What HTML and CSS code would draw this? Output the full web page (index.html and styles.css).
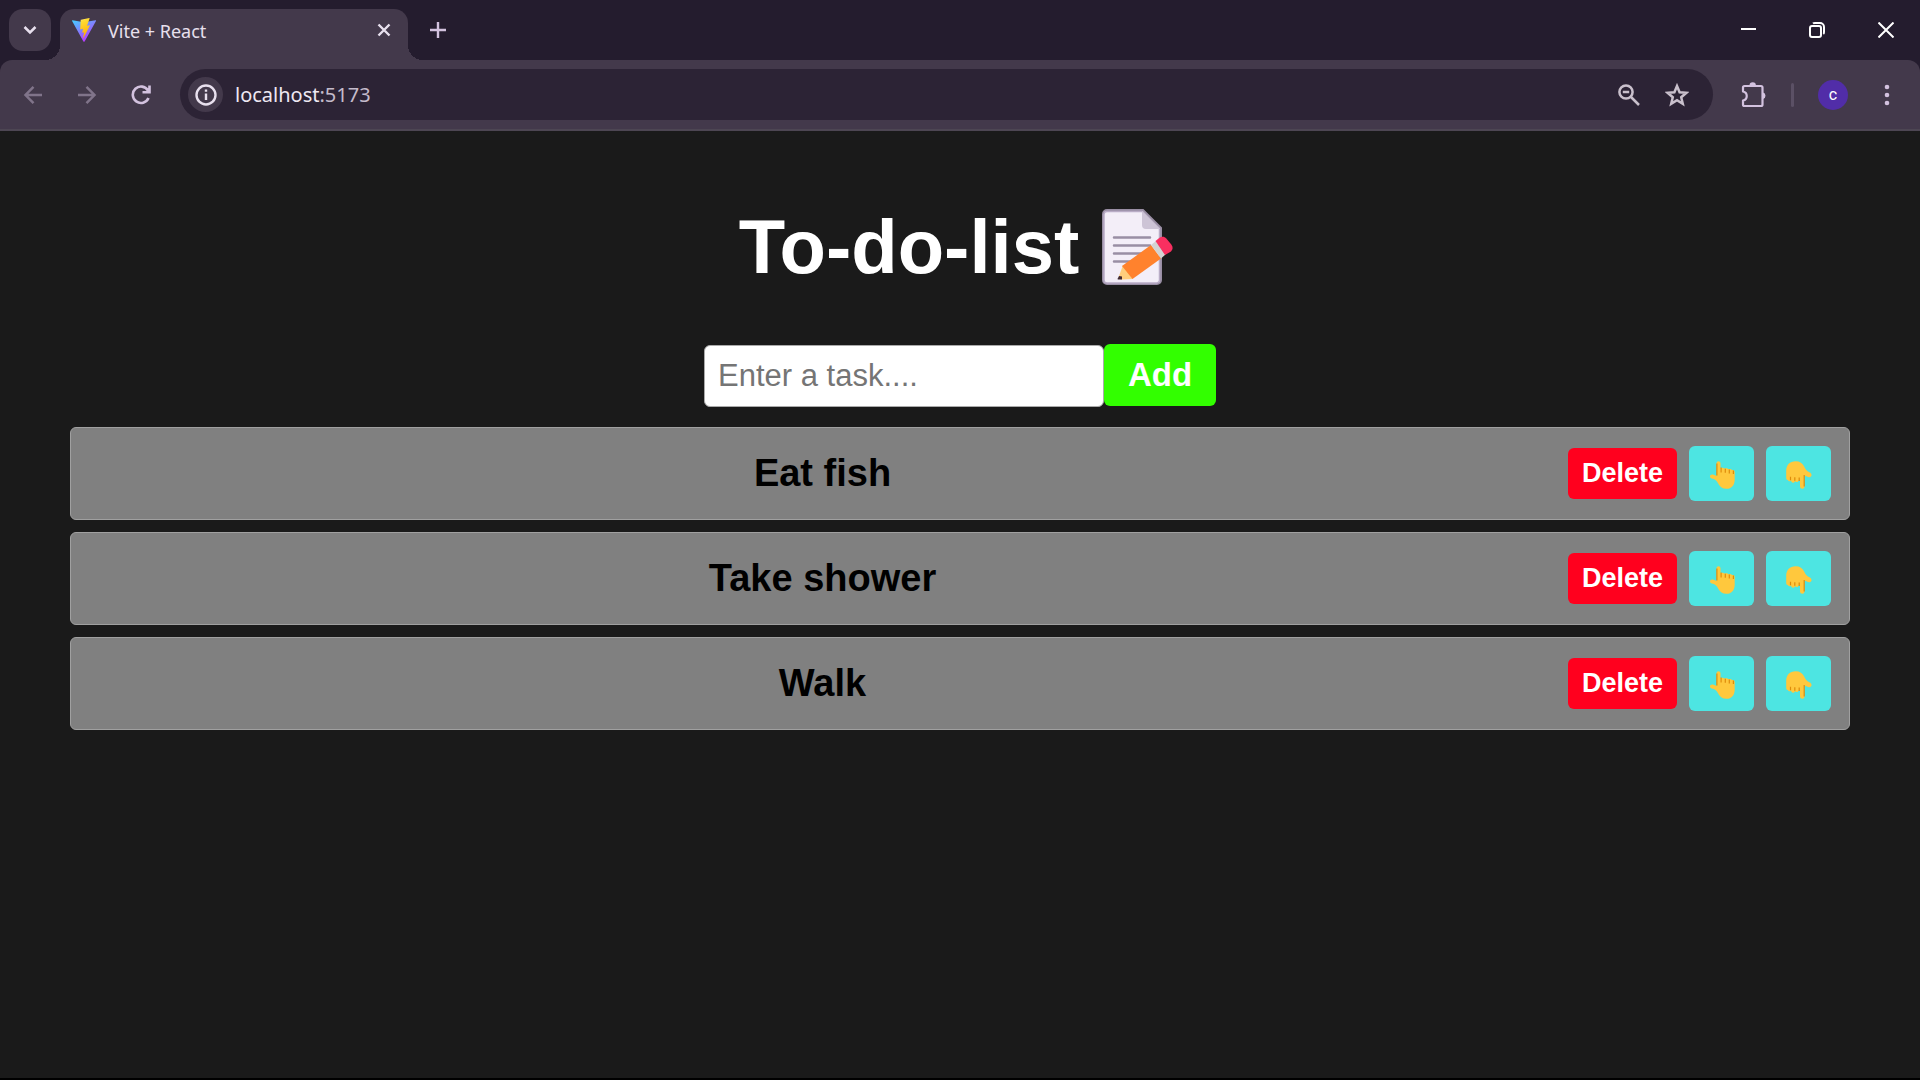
FILE: index.html
```html
<!DOCTYPE html>
<html lang="en">
<head>
<meta charset="utf-8">
<meta name="viewport" content="width=device-width, initial-scale=1">
<title>Vite + React</title>
<link rel="stylesheet" href="styles.css">
</head>
<body>
<svg class="sprite" aria-hidden="true">
  <symbol id="hand-up" viewBox="-2 0 28 28">
    <path fill="#ffc83d" d="M6.500 2.200a2 2 0 0 1 4 0V7.200c.6-.6 3.400-.6 4 .5.800-.6 3.400-.4 3.900.6.900-.5 3 -.2 3.500.8 1-.4 2.800.1 2.800 1.700V18.500c0 5.600-3 9.300-8.300 9.300-4.200 0-6.800-2-8.400-5.500-1-2.200-2.500-3.800-5-4.500C1 17.400 0 16.500 0 15.400c0-1.400 1.400-2.200 3-1.800L6.500 14.900z"/>
    <path fill="none" stroke="#d67d00" stroke-opacity=".8" stroke-width="1.200" d="M6.900 2.500v12M11.100 6.500v5M15.300 7.800v4M19.300 8.500v4M23.400 9.500v3.500"/>
  </symbol>
  <symbol id="hand-down" viewBox="0 0 26 28">
    <path fill="#ffc83d" d="M14 25.500V19.500l-1.500.2a1.800 1.800 0 0 1-3.400.3 1.900 1.900 0 0 1-4-.4 1.900 1.900 0 0 1-3.300-.5C.4 19 .200 18 .200 16.500V10C.200 4 3.800.3 9.600.3c4.300 0 7.100 2 8.700 5.500 1 2.600 2.600 4.400 5 5.500 1.600.7 2.200 1.500 2.200 2.800 0 1.800-1.600 2.500-3.400 1.800L18.500 14.500v11a2.200 2.200 0 0 1-4.500 0z"/>
    <path fill="none" stroke="#d67d00" stroke-opacity=".8" stroke-width="1.200" d="M4.500 15.800v3.400M8.800 16.200v3.600M13.200 16.500v3.600M18.200 14v11.500"/>
  </symbol>
</svg>

<header class="browser">
  <div class="tabstrip">
    <button class="tab-search" aria-label="Search tabs"><svg width="14" height="10" viewBox="0 0 14 10"><path d="M1.500 2L7 7.500 12.500 2" fill="none" stroke="currentColor" stroke-width="2.500"/></svg></button>
    <div class="tab">
      <svg class="favicon" width="24" height="24" viewBox="0 0 24 24">
        <defs>
          <linearGradient id="shield" x1="0" y1="0" x2=".6" y2="1"><stop offset="0" stop-color="#41d1ff"/><stop offset="1" stop-color="#bd34fe"/></linearGradient>
          <linearGradient id="bolt" x1=".4" y1="0" x2=".6" y2="1"><stop offset="0" stop-color="#ffea83"/><stop offset=".1" stop-color="#ffdd35"/><stop offset="1" stop-color="#ffa800"/></linearGradient>
        </defs>
        <path fill="url(#shield)" d="M.5 2.200L12 4.200l11.500-2c.5 0 .7.400.5.800L12.600 23.400c-.3.500-.9.500-1.200 0L.1 3c-.2-.4 0-.8.400-.8z"/>
        <path fill="url(#bolt)" d="M17.300.1L9 1.700c-.2 0-.3.200-.3.300L8.200 11c0 .2.200.4.400.4l2.400-.6-.7 3.500c0 .3.200.5.400.4l1.500-.4-1.100 5.200c-.1.400.4.500.5.200l6.200-12c.1-.2-.1-.5-.3-.4l-2.500.4 2.600-7.200c.1-.2-.1-.4-.3-.4z"/>
      </svg>
      <span class="tab-title">Vite + React</span>
      <button class="tab-close" aria-label="Close tab"><svg width="14" height="14" viewBox="0 0 14 14"><path d="M1.500 1.500l11 11M12.500 1.500l-11 11" stroke="currentColor" stroke-width="2.400"/></svg></button>
    </div>
    <button class="new-tab" aria-label="New tab"><svg width="16" height="16" viewBox="0 0 16 16"><path d="M8 0v16M0 8h16" stroke="currentColor" stroke-width="2.400"/></svg></button>
    <div class="window-controls">
      <button aria-label="Minimize"><svg width="16" height="16" viewBox="0 0 16 16"><path d="M1 7h15" stroke="currentColor" stroke-width="2"/></svg></button>
      <button aria-label="Restore"><svg width="16" height="16" viewBox="0 0 16 16" fill="none" stroke="currentColor" stroke-width="2"><rect x="1" y="4" width="11" height="11" rx="2"/><path d="M4 1.500C4.500 1 5 1 6 1h5a4 4 0 0 1 4 4v5c0 1-.1 1.600-.7 2"/></svg></button>
      <button aria-label="Close window"><svg width="16" height="16" viewBox="0 0 16 16"><path d="M.5 .5l15 15M15.500 .5l-15 15" stroke="currentColor" stroke-width="2"/></svg></button>
    </div>
  </div>

  <div class="toolbar">
    <button class="nav dim" aria-label="Back"><svg width="20" height="20" viewBox="0 0 20 20" fill="none" stroke="currentColor" stroke-width="2.500"><path d="M19 10H3M10.500 1.800L2.500 10l8 8.200"/></svg></button>
    <button class="nav dim" aria-label="Forward"><svg width="20" height="20" viewBox="0 0 20 20" fill="none" stroke="currentColor" stroke-width="2.500"><path d="M1 10h16M9.500 1.800l8 8.200-8 8.200"/></svg></button>
    <button class="nav" aria-label="Reload"><svg width="20" height="20" viewBox="0 0 20 20" fill="none" stroke="currentColor" stroke-width="2.600"><path d="M17.500 13A8.200 8.200 0 1 1 17 5.500L18 7M18.500 .5V7.300H11.500"/></svg></button>
    <div class="omnibox">
      <button class="site-info" aria-label="View site information"><svg width="22" height="22" viewBox="0 0 22 22"><circle cx="11" cy="11" r="9.500" fill="none" stroke="currentColor" stroke-width="2.400"/><path d="M11 9.500v6.500M11 5.500v2.300" stroke="currentColor" stroke-width="2.400"/></svg></button>
      <a class="address" href="#"><span class="host">localhost</span>:5173</a>
      <button class="omni-action" aria-label="Zoom"><svg width="22" height="22" viewBox="0 0 22 22" fill="none" stroke="currentColor" stroke-width="2.500"><circle cx="8" cy="8" r="6.600"/><path d="M13 13l8 8M4.800 8h6.400"/></svg></button>
      <button class="omni-action" aria-label="Bookmark this tab"><svg width="24" height="24" viewBox="0 0 24 24" fill="none" stroke="currentColor" stroke-width="2.500"><path d="M12 3l2.600 6.200 6.800.6-5.200 4.400 1.600 6.600L12 17.300l-5.800 3.500 1.600-6.600-5.200-4.400 6.800-.6z"/></svg></button>
    </div>
    <button class="extensions" aria-label="Extensions"><svg width="26" height="26" viewBox="0 0 26 26"><path d="M3.500 4H20a1.500 1.500 0 0 1 1.500 1.500V22.500A1.500 1.500 0 0 1 20 24H3.500A1.500 1.500 0 0 1 2 22.500V18.500c5-1 5-8 0-9V5.500A1.500 1.500 0 0 1 3.500 4z" fill="none" stroke="currentColor" stroke-width="2.200" stroke-linejoin="round"/><path d="M8.500 3.500a3.200 3.200 0 0 1 6.400 0zM22 10.600a3.300 3.300 0 0 1 0 6.400z" fill="currentColor"/></svg></button>
    <span class="divider"></span>
    <button class="avatar" aria-label="Profile">c</button>
    <button class="menu" aria-label="Browser menu"><svg width="6" height="22" viewBox="0 0 6 22" fill="currentColor"><circle cx="3" cy="3" r="2.300"/><circle cx="3" cy="11" r="2.300"/><circle cx="3" cy="19" r="2.300"/></svg></button>
  </div>
</header>

<main class="todo">
  <h1 class="title">To-do-list
    <svg class="memo" role="img" aria-label="memo" width="72" height="76" viewBox="0 0 72 76">
      <path d="M5 1h36l18 18v52a4 4 0 0 1-4 4H5a4 4 0 0 1-4-4V5a4 4 0 0 1 4-4z" fill="#f3eef8" stroke="#998ea4" stroke-width="2"/>
      <path d="M5 2.500h35L57.500 20v51a3 3 0 0 1-3 3H5a3 3 0 0 1-3-3V5.500a3 3 0 0 1 3-3z" fill="none" stroke="#b9acc6" stroke-width="1.500"/>
      <path d="M40 2l18 18H44a4 4 0 0 1-4-4z" fill="#cdc4d6"/>
      <path d="M12 28.500h36M12 36.500h36M12 44.500h30M12 52.500h20" stroke="#998ea4" stroke-width="2.500" stroke-linecap="round"/>
      <path d="M21 56L17 67c-.5 2 .5 3.500 2.500 3.500L31 70z" fill="#ffce7c"/>
      <path d="M17 67l3 .5 0 3-3.500 0c-1 0-1-.5-.8-1z" fill="#402a32"/>
      <path d="M20 57L49 36l10 13.500L30.500 70z" fill="#ff822d"/>
      <path d="M49 36l5-4L63.500 45.500 59 49.500z" fill="#d3d3d3"/>
      <path d="M53.500 32l4-3.200c2-1.500 5-1.500 6.800.6l5 6.200c1.800 2.400 1.800 5-.3 6.800L63 46z" fill="#f92f60"/>
    </svg>
  </h1>

  <form class="entry">
    <input class="task-input" type="text" placeholder="Enter a task...." aria-label="Task">
    <button class="add" type="button">Add</button>
  </form>

  <ol class="tasks">
    <li class="task">
      <span class="task-text">Eat fish</span>
      <button class="delete">Delete</button>
      <button class="move" aria-label="Move up"><svg width="28" height="28"><use href="#hand-up"/></svg></button>
      <button class="move" aria-label="Move down"><svg width="26" height="28"><use href="#hand-down"/></svg></button>
    </li>
    <li class="task">
      <span class="task-text">Take shower</span>
      <button class="delete">Delete</button>
      <button class="move" aria-label="Move up"><svg width="28" height="28"><use href="#hand-up"/></svg></button>
      <button class="move" aria-label="Move down"><svg width="26" height="28"><use href="#hand-down"/></svg></button>
    </li>
    <li class="task">
      <span class="task-text">Walk</span>
      <button class="delete">Delete</button>
      <button class="move" aria-label="Move up"><svg width="28" height="28"><use href="#hand-up"/></svg></button>
      <button class="move" aria-label="Move down"><svg width="26" height="28"><use href="#hand-down"/></svg></button>
    </li>
  </ol>
</main>
</body>
</html>
```
FILE: styles.css
```css
* { box-sizing: border-box; }

body {
  margin: 0;
  min-height: 100vh;
  display: flex;
  flex-direction: column;
  background: #1a1a1a;
  border-bottom: 2px solid #000;
  font-family: "Liberation Sans", Arial, sans-serif;
}

button {
  display: inline-flex;
  align-items: center;
  justify-content: center;
  flex: none;
  padding: 0;
  border: 0;
  background: none;
  color: inherit;
  font: inherit;
}

svg { display: block; }
.sprite { position: absolute; width: 0; height: 0; }

/* Browser frame */
.browser {
  background: #241c2e;
  color: #e8e0ee;
  font-family: "Noto Sans", sans-serif;
}

.tabstrip {
  display: flex;
  height: 60px;
  padding-left: 9px;
}

.tab-search {
  width: 42px;
  height: 42px;
  margin: 9px 9px 0 0;
  border-radius: 14px;
  background: #43394b;
}

.tab {
  position: relative;
  display: flex;
  align-items: center;
  gap: 12px;
  width: 348px;
  margin-top: 9px;
  padding: 0 17px 9px 12px;
  border-radius: 14px 14px 0 0;
  background: #43394b;
}

.tab::before,
.tab::after {
  content: "";
  position: absolute;
  bottom: 0;
  width: 15px;
  height: 15px;
}

.tab::before {
  right: 100%;
  background: radial-gradient(circle at 0 0, transparent 15px, #43394b 15px);
}

.tab::after {
  left: 100%;
  background: radial-gradient(circle at 100% 0, transparent 15px, #43394b 15px);
}

.tab-title { flex: 1; padding-top: 2px; font-size: 18px; line-height: 24px; }
.new-tab { width: 36px; height: 42px; margin: 9px 0 0 12px; color: #d3c2df; }

.window-controls { display: flex; margin-left: auto; color: #fff; }
.window-controls button { width: 69px; height: 59px; }

.toolbar {
  display: flex;
  align-items: center;
  height: 71px;
  padding: 0 30px 0 23px;
  border-bottom: 2px solid #4d4653;
  border-radius: 12px 12px 0 0;
  background: #43394b;
}

.nav { width: 20px; margin-right: 34px; color: #d3c2df; }
.dim { color: #80748a; }

.omnibox {
  display: flex;
  flex: 1;
  align-items: center;
  height: 51px;
  margin-left: -5px;
  padding: 0 24px 0 8px;
  border-radius: 26px;
  background: #2c2335;
}

.site-info { width: 35px; height: 35px; border-radius: 50%; background: #43394b; }

.address {
  flex: 1;
  margin-left: 12px;
  color: #c4bbcb;
  font-size: 20px;
  line-height: 28px;
  text-decoration: none;
}

.host { color: #eee8f2; }
.omni-action { margin-left: 25px; color: #c9c0cc; }
.extensions { margin-left: 28px; color: #d3c2df; }
.divider { width: 3px; height: 24px; margin: 0 24px; border-radius: 2px; background: #5b5065; }

.avatar {
  width: 30px;
  height: 30px;
  border-radius: 50%;
  background: #512da8;
  color: #fff;
  font-family: Roboto, sans-serif;
  font-size: 16px;
}

.menu { margin-left: 36px; color: #d3c2df; }

/* To-do list */
.todo {
  flex: 1;
  padding: 72px 70px;
}

.title {
  display: flex;
  align-items: center;
  justify-content: center;
  gap: 23px;
  margin: 0;
  padding-right: 7px;
  color: #fff;
  font-size: 76px;
  line-height: 88px;
}

.entry {
  display: flex;
  justify-content: center;
  margin: 53px 0 20px;
}

.task-input {
  width: 400px;
  height: 62px;
  margin-top: 1px;
  padding: 0 13px;
  border: 1px solid #aaa;
  border-radius: 6px;
  background: #fff;
  color: #222;
  font: 31px/36px "Liberation Sans", Arial, sans-serif;
}

.task-input::placeholder { color: #757575; opacity: 1; }

.add {
  width: 112px;
  height: 62px;
  border-radius: 6px;
  background: #32ff00;
  color: #fff;
  font-size: 33px;
  font-weight: bold;
}

.tasks {
  display: flex;
  flex-direction: column;
  gap: 12px;
  margin: 0;
  padding: 0;
  list-style: none;
}

.task {
  display: flex;
  align-items: center;
  gap: 12px;
  padding: 18px;
  border: 1px solid #a0a0a0;
  border-radius: 6px;
  background: #808080;
}

.task-text {
  flex: 1;
  padding-bottom: 2px;
  color: #000;
  font-size: 38px;
  font-weight: bold;
  line-height: 44px;
  text-align: center;
}

.delete {
  width: 109px;
  height: 51px;
  border-radius: 6px;
  background: #ff001e;
  color: #fff;
  font-size: 27px;
  font-weight: bold;
}

.move {
  width: 65px;
  height: 55px;
  padding-top: 2px;
  border-radius: 6px;
  background: #4de5e2;
}
```
